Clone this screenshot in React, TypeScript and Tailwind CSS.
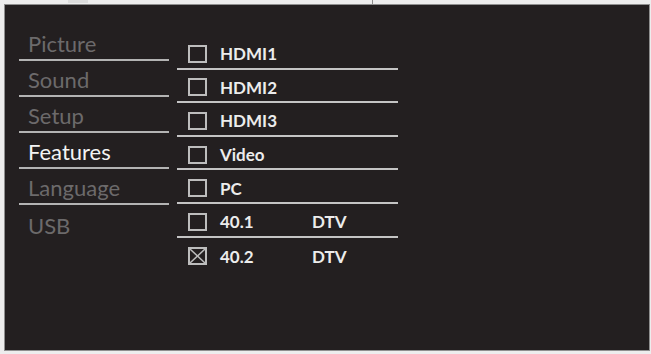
import React from "react";

const menu = [
  { label: "Picture", active: false },
  { label: "Sound", active: false },
  { label: "Setup", active: false },
  { label: "Features", active: true },
  { label: "Language", active: false },
  { label: "USB", active: false },
];

const channels = [
  { name: "HDMI1", type: "", checked: false },
  { name: "HDMI2", type: "", checked: false },
  { name: "HDMI3", type: "", checked: false },
  { name: "Video", type: "", checked: false },
  { name: "PC", type: "", checked: false },
  { name: "40.1", type: "DTV", checked: false },
  { name: "40.2", type: "DTV", checked: true },
];

function CheckBox({ checked }: { checked: boolean }) {
  return (
    <svg width="19" height="18" viewBox="0 0 19 18" className="shrink-0">
      <rect x="1" y="1" width="17" height="16" fill="none" stroke="#bdbdbd" strokeWidth="2" />
      {checked && (
        <g stroke="#bdbdbd" strokeWidth="1.5">
          <line x1="2" y1="2" x2="17" y2="16" />
          <line x1="17" y1="2" x2="2" y2="16" />
        </g>
      )}
    </svg>
  );
}

export default function App() {
  return (
    <div className="w-[651px] h-[354px] bg-[#ededed] pt-[4px] pl-[4px] pr-[1px] pb-[3px] relative">
      {/* little marks on the top strip */}
      <div className="absolute left-[372px] top-0 w-px h-[4px] bg-[#8c8c8c]" />
      <div className="absolute left-[68px] top-0 w-[20px] h-[3px] bg-[#dcdcdc]" />

      <div
        className="w-full h-full bg-[#231f20] border border-[#8f8f8f] flex items-start pl-[14px] gap-[8px]"
        style={{ fontFamily: "Lato, 'Open Sans', sans-serif" }}
      >
        {/* left menu */}
        <div className="w-[150px] mt-[20px] flex flex-col">
          {menu.map((item, i) => (
            <div
              key={item.label}
              className={`h-[36px] flex items-end pl-[9px] pb-[4px] ${
                i < menu.length - 1 ? "border-b-2 border-[#b3b3b3]" : ""
              }`}
            >
              <span
                className={`text-[22px] leading-none ${
                  item.active ? "text-[#f4f4f4]" : "text-[#6c6a6b]"
                }`}
              >
                {item.label}
              </span>
            </div>
          ))}
        </div>

        {/* channel list */}
        <div className="w-[221px] mt-[31px] flex flex-col">
          {channels.map((ch, i) => (
            <div
              key={ch.name}
              className={`h-[33.6px] flex items-center pl-[11px] pt-[4px] ${
                i < channels.length - 1 ? "border-b-2 border-[#c4c4c4]" : ""
              }`}
            >
              <CheckBox checked={ch.checked} />
              <span className="ml-[13px] w-[92px] text-[17px] font-bold text-[#ececec] leading-none">
                {ch.name}
              </span>
              {ch.type && (
                <span className="text-[17px] font-bold text-[#ececec] leading-none">{ch.type}</span>
              )}
            </div>
          ))}
        </div>
      </div>
    </div>
  );
}
